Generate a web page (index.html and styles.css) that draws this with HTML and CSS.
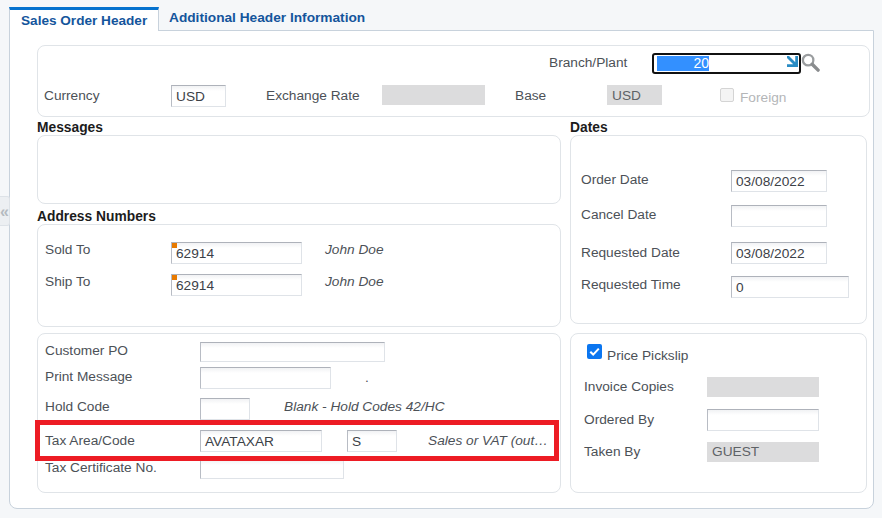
FILE: index.html
```html
<!DOCTYPE html>
<html lang="en">
<head>
<meta charset="utf-8">
<title>Sales Order Header</title>
<link rel="stylesheet" href="styles.css">
</head>
<body>
<div class="handle"><span>«</span></div>
<div class="tabs">
  <div class="tab active">Sales Order Header</div>
  <div class="tab">Additional Header Information</div>
</div>
<main class="panel">
  <section class="box top-box">
    <div class="row branch-row">
      <span class="label branch-label">Branch/Plant</span>
      <div class="branch-input">
        <span class="selection">20</span>
        <svg class="corner" viewBox="0 0 12 12"><path d="M12 0V12H0V9H6.8L0 2.2V0H2.2L9 6.8V0Z" fill="#2a8cc4"/></svg>
      </div>
      <svg class="search" viewBox="0 0 20 20"><circle cx="7.5" cy="7.5" r="5.5" fill="#fff" stroke="#9a9d9f" stroke-width="2.4"/><path d="M11.8 11.8 18 18" stroke="#8a8c8e" stroke-width="3.6" stroke-linecap="round"/></svg>
    </div>
    <div class="row currency-row">
      <span class="label c-label l10">Currency</span>
      <span class="field w55">USD</span>
      <span class="label ex-label l10">Exchange Rate</span>
      <span class="field ro w103"></span>
      <span class="label base-label l10">Base</span>
      <span class="field ro base-code w55">USD</span>
      <span class="check-off"></span>
      <span class="foreign">Foreign</span>
    </div>
  </section>

  <div class="columns">
    <div class="col-left">
      <h2 class="heading">Messages</h2>
      <section class="box messages"></section>
      <h2 class="heading address-h">Address Numbers</h2>
      <section class="box address">
        <div class="row sold"><span class="label addr-label l7">Sold To</span><span class="field w131 flag">62914</span><em class="note name l7">John Doe</em></div>
        <div class="row ship"><span class="label addr-label l7">Ship To</span><span class="field w131 flag">62914</span><em class="note name l7">John Doe</em></div>
      </section>
      <section class="box details">
        <div class="row d1"><span class="label d-label l8">Customer PO</span><span class="field w185 h20"></span></div>
        <div class="row d2"><span class="label d-label l9">Print Message</span><span class="field w131"></span><span class="dot">.</span></div>
        <div class="row d3"><span class="label d-label l8">Hold Code</span><span class="field w50"></span><em class="note hold l8">Blank - Hold Codes 42/HC</em></div>
        <div class="row d4"><span class="label d-label l10">Tax Area/Code</span><span class="field w122">AVATAXAR</span><span class="field w50 s-code">S</span><em class="note vat l10">Sales or VAT (out…</em></div>
        <div class="row d5"><span class="label d-label l8">Tax Certificate No.</span><span class="field w144 h20"></span></div>
        <div class="highlight"></div>
      </section>
    </div>
    <div class="col-right">
      <h2 class="heading">Dates</h2>
      <section class="box dates">
        <div class="row r1"><span class="label date-label l9">Order Date</span><span class="field w96">03/08/2022</span></div>
        <div class="row r2"><span class="label date-label l9">Cancel Date</span><span class="field w96"></span></div>
        <div class="row r3"><span class="label date-label l10">Requested Date</span><span class="field w96">03/08/2022</span></div>
        <div class="row r4"><span class="label date-label l8">Requested Time</span><span class="field w118">0</span></div>
      </section>
      <section class="box misc">
        <div class="row pick"><span class="check-on"><svg viewBox="0 0 16 16"><path d="M3.5 8.2 6.6 11.3 12.6 4.9" fill="none" stroke="#fff" stroke-width="2.2"/></svg></span><span class="label pick-label">Price Pickslip</span></div>
        <div class="row m1"><span class="label misc-label l9">Invoice Copies</span><span class="field ro w112 h20"></span></div>
        <div class="row m2"><span class="label misc-label l10">Ordered By</span><span class="field w112"></span></div>
        <div class="row m3"><span class="label misc-label l9">Taken By</span><span class="field ro w112 h20">GUEST</span></div>
      </section>
    </div>
  </div>
</main>
</body>
</html>
```
FILE: styles.css
```css
* { box-sizing: border-box; }
html, body { margin: 0; height: 518px; overflow: hidden; }
body {
  position: relative;
  background: #f5f7f9;
  font-family: "Liberation Sans", Arial, sans-serif;
  font-size: 13.7px;
  color: #4c5157;
  padding: 7px 9px 0;
}
.handle {
  position: absolute;
  left: 0; top: 196px;
  width: 10px; height: 30px;
  background: #eceff2;
  border: 1px solid #dde2e7;
  border-left: 0;
  border-radius: 0 3px 3px 0;
  color: #b4bac0;
  font-size: 16px;
  font-weight: bold;
  line-height: 30px;
}
.handle span { display: block; }

.tabs { display: flex; height: 24px; }
.tab {
  font-size: 13.7px;
  font-weight: bold;
  color: #14559c;
  padding: 3px 10px 0;
  line-height: 16px;
}
.tab.active {
  position: relative;
  z-index: 1;
  width: 150px;
  height: 24px;
  padding: 3px 0 0 11px;
  font-size: 13.6px;
  background: #fff;
  border-top: 3px solid #0572ce;
  border-left: 1px solid #c8d2dc;
  border-right: 1px solid #c8d2dc;
}
.panel {
  width: 865px;
  height: 479px;
  margin-top: -1px;
  padding: 14px 3px 0 27px;
  background: #fff;
  border: 1px solid #c8d2dc;
  border-radius: 0 0 8px 8px;
}
.box {
  position: relative;
  background: #fff;
  border: 1px solid #e0e4e8;
  border-radius: 8px;
}
.top-box { height: 72px; padding: 6px 0 0 6px; }
.columns { display: flex; }
.col-left { width: 524px; }
.col-right { width: 297px; margin-left: 9px; }
.heading {
  margin: 0;
  font-size: 13.8px;
  font-weight: bold;
  line-height: 16px;
  color: #1c1c1c;
  height: 18px;
  padding-top: 3px;
}
.messages { height: 69px; }
.address-h { margin-top: 3px; height: 17px; padding-top: 2px; }
.address { height: 103px; padding: 17px 0 0 7px; }
.details { height: 160px; margin-top: 6px; padding: 8px 0 0 7px; }
.dates { height: 189px; padding: 34px 0 0 10px; width: 297px; }
.misc { height: 160px; margin-top: 9px; padding: 10px 0 0 13px; width: 297px; }

.row { display: flex; align-items: flex-start; }
.label { line-height: 18px; white-space: nowrap; flex: none; }
.l7 { margin-top: -1px; }
.l8 { margin-top: 0; }
.l9 { margin-top: 1px; }
.l10 { margin-top: 2px; }

.field {
  display: block;
  flex: none;
  height: 22px;
  padding: 2px 0 0 4px;
  font-size: 13.7px;
  line-height: 18px;
  background: linear-gradient(#f1f2f4, #fff 5px);
  border: 1px solid #dfe3e8;
  border-top-color: #aeb2ba;
  border-left-color: #b8bcc4;
  white-space: nowrap;
  color: #3c4147;
}
.field.ro {
  background: #dcdcdd;
  border: 0;
  height: 20px;
  padding: 1px 0 0 5px;
  color: #5e6266;
}
.field.base-code { padding-top: 2px; }
.h20 { height: 20px; }
.w50 { width: 50px; }
.w55 { width: 55px; }
.w96 { width: 96px; }
.w103 { width: 103px; }
.w112 { width: 112px; }
.w118 { width: 118px; }
.w122 { width: 122px; }
.w131 { width: 131px; }
.w144 { width: 144px; }
.w185 { width: 185px; }

.flag { position: relative; }
.flag::before {
  content: "";
  position: absolute;
  left: 0; top: 0;
  width: 5px; height: 5px;
  background: #e87a00;
}
.note { font-style: italic; line-height: 18px; white-space: nowrap; flex: none; }

.branch-row { height: 33px; padding-left: 505px; align-items: flex-start; }
.branch-label { margin: 2px 0 0 0; width: 103px; }
.branch-input {
  position: relative;
  flex: none;
  width: 149px;
  height: 21px;
  margin-top: 1px;
  padding-left: 3px;
  border: 2px solid #111;
  border-radius: 3px;
  background: #fff;
}
.selection {
  display: block;
  width: 52px;
  height: 15px;
  margin-top: 1px;
  background: #3390ff;
  color: #fff;
  font-size: 14px;
  line-height: 15px;
  text-align: right;
}
.corner { position: absolute; right: 1px; top: 1px; width: 11px; height: 11px; }
.search { flex: none; width: 19px; height: 19px; margin: 1px 0 0 0; }

.c-label { width: 127px; }
.ex-label { margin-left: 40px; width: 116px; }
.base-label { margin-left: 30px; width: 92px; }
.check-off {
  flex: none;
  width: 14px; height: 14px;
  margin: 3px 0 0 58px;
  background: #f4f4f4;
  border: 1px solid #d4d4d4;
  border-radius: 2px;
}
.foreign { color: #b4b6b8; margin: 4px 0 0 6px; line-height: 18px; }

.addr-label { width: 126px; }
.name { margin-left: 23px; }
.ship { margin-top: 10px; }
.d-label { width: 155px; }
.d2 { margin-top: 5px; }
.d3 { margin-top: 9px; }
.d4 { margin-top: 10px; }
.d5 { margin-top: 7px; }
.dot { margin: 3px 0 0 34px; line-height: 16px; }
.hold { margin-left: 34px; }
.s-code { margin-left: 25px; }
.vat { margin-left: 31px; }
.highlight {
  position: absolute;
  left: -3px; top: 86px;
  width: 524px; height: 41px;
  border: 5px solid #ed1c24;
}
.date-label { width: 150px; }
.r2 { margin-top: 13px; }
.r3 { margin-top: 15px; }
.r4 { margin-top: 12px; }
.check-on {
  flex: none;
  width: 15px; height: 15px;
  background: #0b76f0;
  border-radius: 2px;
  margin: 0 5px 0 3px;
}
.check-on svg { display: block; width: 15px; height: 15px; }
.pick-label { margin-top: 3px; }
.misc-label { width: 123px; }
.m1 { margin-top: 12px; }
.m2 { margin-top: 12px; }
.m3 { margin-top: 11px; }
```
